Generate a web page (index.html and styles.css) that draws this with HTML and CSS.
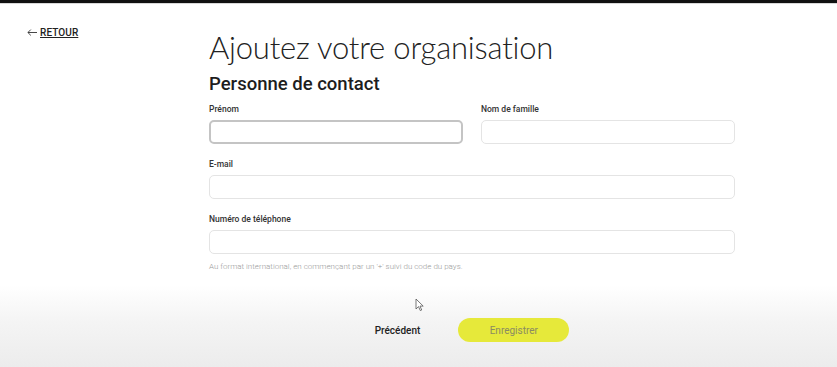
FILE: index.html
```html
<!DOCTYPE html>
<html lang="fr">
<head>
<meta charset="utf-8">
<title>Ajoutez votre organisation</title>
<link rel="stylesheet" href="styles.css">
</head>
<body>
<div class="topbar"></div>
<main class="layout">
  <div class="side">
    <a class="back" href="#"><svg class="arrow" width="10" height="7" viewBox="0 0 10 7"><path d="M10 3.5 H1 M3.8 0.6 L0.9 3.5 L3.8 6.4" fill="none" stroke="#333" stroke-width="0.9"/></svg><span class="back-text">RETOUR</span></a>
  </div>
  <form class="form">
    <h1 class="title">Ajoutez votre organisation</h1>
    <h2 class="subtitle">Personne de contact</h2>
    <div class="row">
      <div class="field">
        <label class="label">Prénom</label>
        <input class="input input-focus" type="text">
      </div>
      <div class="field">
        <label class="label">Nom de famille</label>
        <input class="input" type="text">
      </div>
    </div>
    <div class="field">
      <label class="label">E-mail</label>
      <input class="input" type="text">
    </div>
    <div class="field field-last">
      <label class="label">Numéro de téléphone</label>
      <input class="input" type="text">
      <p class="help">Au format international, en commençant par un '+' suivi du code du pays.</p>
    </div>
  </form>
</main>
<footer class="footer">
  <div class="footer-inner">
    <div></div>
    <div class="actions">
      <button class="btn-prev" type="button">Précédent</button>
      <button class="btn-save" type="button">Enregistrer</button>
    </div>
  </div>
  <svg class="cursor" width="9" height="14" viewBox="0 0 9 14"><path d="M1 1 L1 11 L3.5 8.6 L5.3 12.6 L6.7 12 L5 8.1 L8.2 8.1 Z" fill="#fff" stroke="#555" stroke-width="0.8" stroke-linejoin="round"/></svg>
</footer>
</body>
</html>
```
FILE: styles.css
```css
* { box-sizing: border-box; }
html, body { margin: 0; padding: 0; }
body {
  width: 837px;
  height: 367px;
  overflow: hidden;
  background: #fff;
  font-family: Roboto, "Liberation Sans", sans-serif;
  color: #222;
  position: relative;
}
.topbar {
  height: 4px;
  background: #111;
  border-bottom: 1px solid #d8d8d8;
}
.layout {
  display: grid;
  grid-template-columns: 209px 526px;
}
.side { padding: 17px 0 0 27px; }
.back {
  display: inline-flex;
  align-items: center;
  gap: 3px;
  color: #222;
  text-decoration: none;
  font-size: 10px;
  font-weight: 500;
  line-height: 12px;
}
.arrow { display: block; }
.back-text { text-decoration: underline; letter-spacing: 0.1px; }
.form { padding-top: 25px; margin: 0; }
.title {
  margin: 0;
  font-family: Lato, "Open Sans", sans-serif;
  font-weight: 300;
  font-size: 31px;
  line-height: 36px;
  color: #222;
  letter-spacing: -0.2px;
}
.subtitle {
  margin: 7px 0 0;
  font-family: Roboto, sans-serif;
  font-weight: 500;
  font-size: 18.5px;
  line-height: 24px;
  color: #1d1d1d;
}
.row {
  display: grid;
  grid-template-columns: 254px 254px;
  column-gap: 18px;
  margin-top: 7px;
}
.field { display: flex; flex-direction: column; margin-bottom: 14px; }
.field-last { margin-bottom: 0; }
.label {
  font-size: 8.5px;
  font-weight: 500;
  line-height: 12px;
  color: #333;
  margin-bottom: 5px;
}
.input {
  height: 24px;
  width: 100%;
  border: 1px solid #e4e4e4;
  border-radius: 5px;
  background: #fff;
  outline: none;
  padding: 0 8px;
}
.input-focus {
  border: 2px solid #c4c4c4;
}
.help {
  margin: 7px 0 0;
  font-size: 8px;
  line-height: 12px;
  color: #9a9a9a;
  font-weight: 300;
}
.footer {
  position: absolute;
  left: 0;
  right: 0;
  top: 285px;
  bottom: 0;
  background: linear-gradient(to bottom, #ffffff 0%, #f4f4f4 45%, #ececec 100%);
}
.footer-inner {
  display: grid;
  grid-template-columns: 209px 526px;
  padding-top: 33px;
}
.actions {
  display: flex;
  justify-content: center;
  align-items: center;
  gap: 38px;
}
.btn-prev {
  border: none;
  background: none;
  padding: 0;
  font-family: Roboto, sans-serif;
  font-weight: 500;
  font-size: 10px;
  color: #222;
}
.btn-save {
  width: 111px;
  height: 24px;
  border: none;
  border-radius: 12px;
  background: #e6e93a;
  color: #8b8b62;
  font-family: Roboto, sans-serif;
  font-size: 10px;
}
.cursor {
  position: absolute;
  left: 415px;
  top: 13px;
}
```
